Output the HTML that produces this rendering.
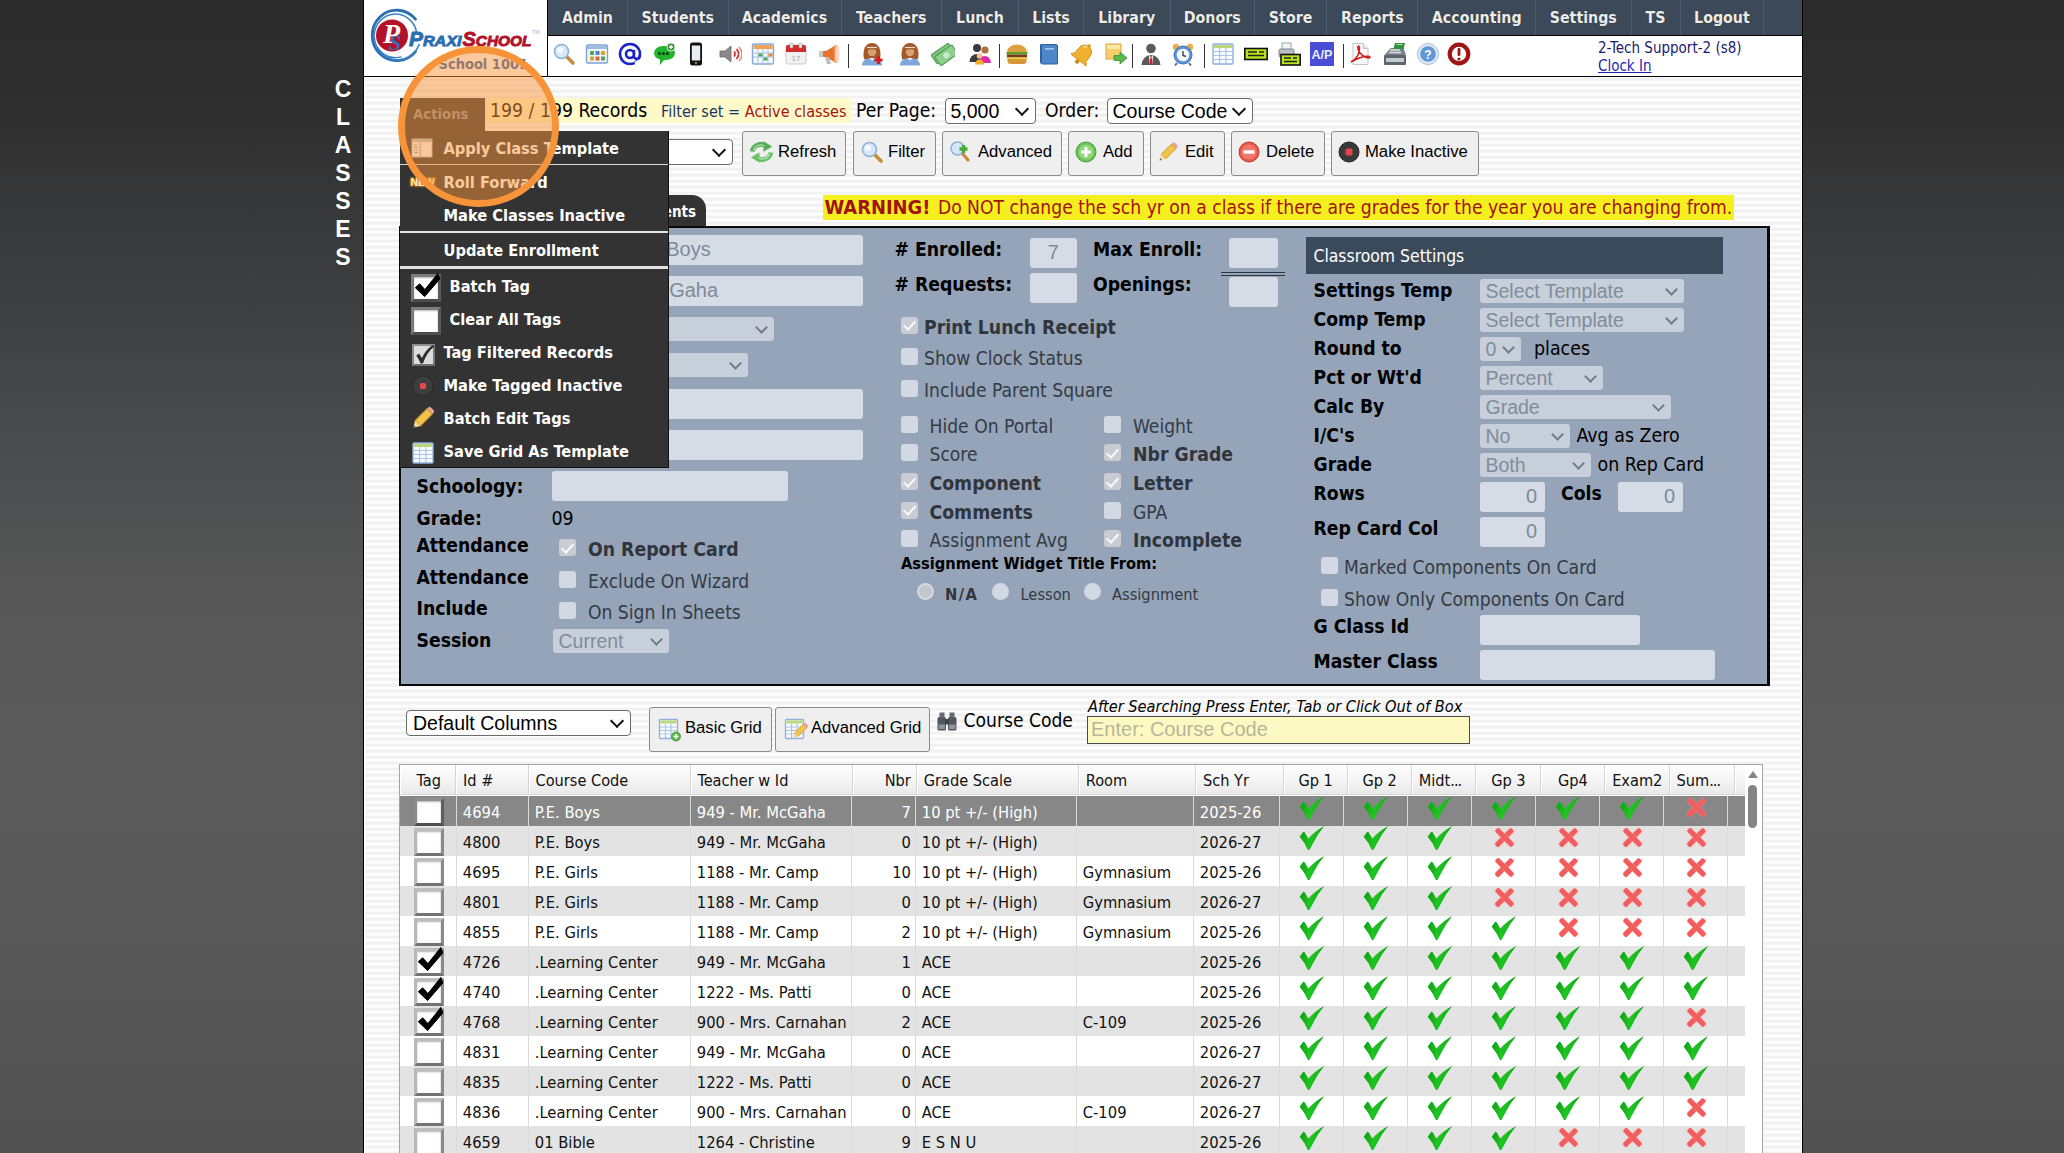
<!DOCTYPE html>
<html lang="en"><head><meta charset="utf-8"><title>Classes</title>
<style>
*{box-sizing:border-box;margin:0;padding:0}
html,body{width:2064px;height:1153px;overflow:hidden}
body{position:relative;background:linear-gradient(180deg,#2b2b2b 0,#2e2e2f 8%,#3f4041 27%,#4f5051 43%,#575757 52%,#5a5a5a 65%,#585858 80%,#515151 100%);font-family:"DejaVu Sans Condensed","DejaVu Sans","Liberation Sans",sans-serif;font-size:20px;font-stretch:condensed;color:#000}
.ab{position:absolute}
.ar{font-family:"Liberation Sans",sans-serif}
.t{position:absolute;white-space:nowrap;line-height:24px;height:24px}
.b{font-weight:bold}
#side{left:332px;top:75px;width:22px;color:#fff;font:bold 23px/28px "Liberation Sans",sans-serif;text-align:center}
#page{left:363px;top:0;width:1440px;height:1153px;border-left:1px solid #000;border-right:1px solid #000;background:repeating-linear-gradient(180deg,#f1f1f1 0,#f1f1f1 2.2px,#fdfdfd 3px,#fdfdfd 5.2px,#f1f1f1 6px);box-shadow:inset 1.5px 0 0 #fff,inset -1px 0 0 #fff}
#logo{left:364px;top:0;width:183px;height:76px;background:#fff}
#nav{left:547px;top:0;width:1255px;height:36px;background:#3c4958;border-left:1px solid #000;border-bottom:1px solid #000}
#nav span{position:absolute;top:0;height:35px;line-height:35.5px;text-align:center;color:#ececec;font-weight:bold;font-size:15.8px;border-right:1px solid #4e5d6d;text-shadow:0 0 1px #222}
#tools{left:547px;top:36px;width:1255px;height:40px;background:#fff;border-left:1px solid #000}
#hline{left:364px;top:76px;width:1438px;height:1px;background:#000}
.sep{position:absolute;top:44px;width:1px;height:24px;background:#333}
.ic{position:absolute;top:42px;width:24px;height:24px}
.btn{position:absolute;height:44px;background:#efefef;border:1px solid #8c8c8c;border-radius:3px;font:16.67px/42px "Liberation Sans",sans-serif;color:#000;white-space:nowrap}
.btn b{font-weight:normal;position:absolute;top:-1px;margin-left:-1px}
.btn svg{position:absolute;margin:-1.25px 0 0 -1.75px}
.btn.lo svg{margin:0 0 0 -.5px}
.btn.lo b{margin-left:0;top:-1px}
.sel{position:absolute;background:#fff;border:1px solid #6b6b6b;border-radius:4px;font:19.5px/24px "Liberation Sans",sans-serif;padding-left:5px;white-space:nowrap;overflow:hidden}
.sel:after,.ps:after{content:"";position:absolute;right:8px;top:50%;width:8px;height:8px;margin-top:-7px;border-right:2px solid #111;border-bottom:2px solid #111;transform:rotate(45deg)}
#panel{left:399px;top:226px;width:1371px;height:460px;background:#95a4b8;border:solid #0a0a0a;border-width:2px 3px 2px 2.5px}
.pi{position:absolute;background:#d6dce5;border-radius:3px;color:#7d8a9a;font:20px/30px "Liberation Sans",sans-serif;height:30px;white-space:nowrap;overflow:hidden}
.ps{position:absolute;background:#c7cfda;border-radius:3px;color:#7f8c9c;font:19.5px/24px "Liberation Sans",sans-serif;height:24px;padding-left:6px;white-space:nowrap;overflow:hidden}
.ps:after{border-color:#6f7c8c;right:8px;width:7px;height:7px;margin-top:-6px}
.lb{position:absolute;font-weight:bold;font-size:19.2px;line-height:24px;height:24px;white-space:nowrap;color:#000}
.cb{position:absolute;width:17px;height:17px;background:#d3d9e2;border-radius:3px}
.cb.on{background:#c9ccd2}
.cb.on:after{content:"";position:absolute;left:5.5px;top:1.5px;width:5px;height:10px;border-right:2.4px solid #fafafa;border-bottom:2.4px solid #fafafa;transform:rotate(42deg)}
.cl{position:absolute;font-size:19.1px;line-height:24px;height:24px;white-space:nowrap;color:#333b45}
.cl.b{color:#30353c;font-size:19.25px}
.rd{position:absolute;width:17px;height:17px;border-radius:50%;background:#d3d9e2}
#menu{left:400px;top:131px;width:269px;height:337px;background:#333;border-right:1px solid #111;border-bottom:1px solid #111}
#menu .mi{position:absolute;left:43.5px;color:#fff;font-weight:bold;font-size:16.3px;line-height:22px;height:22px;margin-top:.8px;white-space:nowrap}
#menu .ms{position:absolute;left:0;width:268px;background:#e2e2e2}
#circle{left:398px;top:46px;width:161px;height:161px;border-radius:50%;border:7.5px solid #f7943a;background:rgba(247,148,58,.5)}
#grid{left:399px;top:764px;width:1364px;height:400px;background:#fff;border:1px solid #a6a6a6}
.gh{position:absolute;top:0;height:30px;border-bottom:1px solid #d6d6d6;background:linear-gradient(180deg,#fdfdfd 0,#f6f6f6 45%,#e9e9e9 100%);border-right:1px solid #d4d4d4;border-left:1px solid #fff;font-size:16.2px;line-height:32.5px;white-space:nowrap;overflow:hidden;color:#111}
u{text-decoration:none;letter-spacing:-1px}
.gr{position:absolute;left:0;width:1345px;height:30px;font-size:16.4px;line-height:33.5px;color:#111}
.gr.o{background:#e3e3e3}
.gr.s{background:#878787;color:#fff}
.gr i{position:absolute;top:0;height:30px;font-style:normal;white-space:nowrap;overflow:hidden;border-right:1px solid #dbdbdb}
.gr.s i{border-right-color:#dadada}
.gr i.r{text-align:right;padding-right:4px}
.gr i.c{text-align:center}
.bx{position:absolute;left:14px;top:1.5px;width:30px;height:28.5px;background:#fff;border:3.5px solid;border-color:#bdbdbd #8a8a8a #727272 #b8b8b8;box-shadow:inset 0 1px 2px rgba(0,0,0,.3)}
.gr.s .bx{border-color:#8f8f8f #5e5e5e #4f4f4f #8c8c8c}
#menu .bx{border-color:#7c7c7c #5a5a5a #4e4e4e #7a7a7a}
.ck{position:absolute;top:0;width:26px;height:25px;background:linear-gradient(100deg,#0c9a10,#1fc524 45%,#0f9d12);clip-path:path('M1.2 10.7L4.5 6Q5.5 5.6 6.2 6.3L9.8 12.6Q17 4.5 25.8 0Q19 8 15 16.5Q12.5 21 11 24L9.3 24Q6 16 1.2 10.7Z')}
.xx{position:absolute;top:1.4px;width:20px;height:20px}
.xx:before,.xx:after{content:"";position:absolute;left:7.65px;top:-1.35px;width:4.7px;height:22.7px;background:#f35c5c;border-radius:1.5px;transform:rotate(45deg);box-shadow:0 0 1.5px #fa9a9a}
.xx:after{transform:rotate(-45deg)}
</style></head>
<body>
<div id="side" class="ab">C<br>L<br>A<br>S<br>S<br>E<br>S</div>
<div id="page" class="ab"></div>
<div id="logo" class="ab">
<svg class="ab" style="left:0;top:0" width="183" height="76" viewBox="0 0 183 76">
<path d="M51.5 51.6A24.5 25.2 0 1 1 51.5 19.2" fill="none" stroke="#2a6db0" stroke-width="2.8" stroke-linecap="round"/>
<path d="M37.0 56.9A21.3 21.8 0 1 1 52.5 32.0" fill="none" stroke="#3b82c4" stroke-width="1.5" stroke-linecap="round"/>
<path d="M55.1 44.5A23 23.5 0 0 1 13.6 48.2" fill="none" stroke="#3b82c4" stroke-width="1.6" stroke-linecap="round"/>
<circle cx="28" cy="35.4" r="16" fill="#b4122b"/>
<text x="19" y="43" font-family="Liberation Serif,serif" font-style="italic" font-weight="bold" font-size="28" fill="#fff">P</text>
<text x="25" y="49.5" font-family="Liberation Serif,serif" font-style="italic" font-weight="bold" font-size="22" fill="#356fb6">S</text>
<text x="45" y="45.5" font-family="Liberation Sans,sans-serif" font-style="italic" font-weight="bold" font-size="20" fill="#2a6db0" stroke="#2a6db0" stroke-width=".9" textLength="52.5" lengthAdjust="spacingAndGlyphs"><tspan>P</tspan><tspan font-size="15.5">RAXI</tspan></text>
<text x="98.5" y="45.5" font-family="Liberation Sans,sans-serif" font-style="italic" font-weight="bold" font-size="20" fill="#b4122b" stroke="#b4122b" stroke-width=".9" textLength="69" lengthAdjust="spacingAndGlyphs"><tspan>S</tspan><tspan font-size="15.5">CHOOL</tspan></text>
<text x="168" y="33.5" font-family="Liberation Sans,sans-serif" font-size="5.5" fill="#9db4cf">TM</text>
</svg>
<div class="t b" style="left:74.5px;top:51.5px;font-size:14.5px;color:#2b5fa8">School 1001</div>
</div>
<div id="nav" class="ab"><span style="left:0.0px;width:80.0px">Admin</span><span style="left:80.0px;width:100.5px">Students</span><span style="left:180.5px;width:113.0px">Academics</span><span style="left:293.5px;width:100.5px">Teachers</span><span style="left:394.0px;width:77.0px">Lunch</span><span style="left:471.0px;width:65.0px">Lists</span><span style="left:536.0px;width:86.5px">Library</span><span style="left:622.5px;width:84.5px">Donors</span><span style="left:707.0px;width:72.2px">Store</span><span style="left:779.2px;width:91.3px">Reports</span><span style="left:870.5px;width:117.5px">Accounting</span><span style="left:988.0px;width:95.5px">Settings</span><span style="left:1083.5px;width:49.0px">TS</span><span style="left:1132.5px;width:83.9px">Logout</span></div>
<div id="tools" class="ab"></div>
<div id="hline" class="ab"></div>
<div class="sep" style="left:847.5px"></div>
<div class="sep" style="left:999.0px"></div>
<div class="sep" style="left:1132.0px"></div>
<div class="sep" style="left:1204.0px"></div>
<div class="sep" style="left:1342.5px"></div>
<svg class="ab" style="left:552px;top:42px" width="24" height="24" viewBox="0 0 24 24"><line x1="14" y1="14" x2="21" y2="21" stroke="#c98a3c" stroke-width="3.6" stroke-linecap="round"/><circle cx="9.5" cy="9.5" r="7" fill="#d4e8fb" stroke="#8fb2d6" stroke-width="1.6"/><circle cx="8" cy="8" r="3.2" fill="#f2f9ff"/></svg>
<svg class="ab" style="left:585px;top:42px" width="24" height="24" viewBox="0 0 24 24"><rect x="1.5" y="3" width="21" height="18" rx="1.5" fill="#eef5fc" stroke="#7fa3d0" stroke-width="1.4"/><rect x="2" y="3.5" width="20" height="3.5" fill="#9dbde3"/><rect x="5" y="9" width="4" height="4" fill="#5aa65a"/><rect x="10.5" y="9" width="4" height="4" fill="#4f86c6"/><rect x="16" y="9" width="4" height="4" fill="#e0a030"/><rect x="5" y="14.5" width="4" height="4" fill="#d9a23a"/><rect x="10.5" y="14.5" width="4" height="4" fill="#d86a3a"/><rect x="16" y="14.5" width="4" height="4" fill="#5aa65a"/></svg>
<svg class="ab" style="left:618px;top:42px" width="24" height="24" viewBox="0 0 24 24"><circle cx="12" cy="12" r="10" fill="none" stroke="#1a22c8" stroke-width="2.6"/><circle cx="12" cy="12" r="4" fill="none" stroke="#1a22c8" stroke-width="2.6"/><path d="M16 8v6.5a2.6 2.6 0 0 0 5.5 -1" fill="none" stroke="#1a22c8" stroke-width="2.4"/><path d="M17 21.5l5-3" stroke="#fff" stroke-width="3"/></svg>
<svg class="ab" style="left:651.5px;top:42px" width="24" height="24" viewBox="0 0 24 24"><path d="M2 11a9 7 0 0 1 9-7h3a9 7 0 0 1 0 14h-2l-4 5v-5.5a8 7 0 0 1-6-6.5z" fill="#22b42c"/><circle cx="7.5" cy="11.5" r="1.5" fill="#0b3d10"/><circle cx="11.5" cy="11.5" r="1.5" fill="#0b3d10"/><circle cx="15.5" cy="11.5" r="1.5" fill="#0b3d10"/><circle cx="19" cy="5" r="4" fill="#3a8f3f" stroke="#cfe9d0" stroke-width="1"/><path d="M19 3v4M17 5h4" stroke="#fff" stroke-width="1.3"/></svg>
<svg class="ab" style="left:684px;top:42px" width="24" height="24" viewBox="0 0 24 24"><rect x="6" y="0.5" width="12" height="23" rx="2.5" fill="#111"/><rect x="7.8" y="3.5" width="8.4" height="15" fill="#e9eef5"/><circle cx="12" cy="21" r="1.2" fill="#888"/></svg>
<svg class="ab" style="left:718px;top:42px" width="24" height="24" viewBox="0 0 24 24"><path d="M2 9h5l6-5v16l-6-5H2z" fill="#8a8a8a" stroke="#6a6a6a" stroke-width=".8"/><path d="M16 9.5a3.5 3.5 0 0 1 0 5" fill="none" stroke="#d23a3a" stroke-width="1.8"/><path d="M18.5 7a7 7 0 0 1 0 10" fill="none" stroke="#d23a3a" stroke-width="1.8"/><path d="M21 5a10 10 0 0 1 0 14" fill="none" stroke="#e88" stroke-width="1.5"/></svg>
<svg class="ab" style="left:751px;top:42px" width="24" height="24" viewBox="0 0 24 24"><rect x="1.5" y="2" width="21" height="20" rx="1.5" fill="#f4f8fd" stroke="#86a9d6" stroke-width="1.4"/><rect x="2.5" y="3" width="19" height="4" fill="#f0a35a"/><path d="M2 11h20M2 15h20M7 7v15M12 7v15M17 7v15" stroke="#a9c2e2" stroke-width="1"/><rect x="7.5" y="11.5" width="4" height="3" fill="#4fa85a"/><rect x="12.5" y="15.5" width="4" height="3" fill="#4fa85a"/><rect x="17.5" y="11.5" width="4" height="3" fill="#e58a3a"/></svg>
<svg class="ab" style="left:784px;top:42px" width="24" height="24" viewBox="0 0 24 24"><rect x="2" y="3" width="20" height="19" rx="2" fill="#f2f2f2" stroke="#c9c9c9" stroke-width="1"/><path d="M2 5a2 2 0 0 1 2-2h16a2 2 0 0 1 2 2v5H2z" fill="#d22d2d"/><rect x="6" y="1" width="3" height="5" rx="1" fill="#eee" stroke="#999" stroke-width=".6"/><rect x="15" y="1" width="3" height="5" rx="1" fill="#eee" stroke="#999" stroke-width=".6"/><text x="12" y="19" text-anchor="middle" font-family="Liberation Sans,sans-serif" font-size="8" fill="#aaa">17</text></svg>
<svg class="ab" style="left:817px;top:42px" width="24" height="24" viewBox="0 0 24 24"><path d="M3 9h6l10-6v18l-10-6H3z" fill="#e8742c"/><path d="M19 3v18" stroke="#f3b48a" stroke-width="3"/><rect x="2" y="9" width="4" height="6" fill="#c9c9c9"/><path d="M8 15l2 7h4l-2-7z" fill="#bdbdbd"/><ellipse cx="20.5" cy="12" rx="2" ry="9" fill="#f6d6c0"/></svg>
<svg class="ab" style="left:860px;top:42px" width="24" height="24" viewBox="0 0 24 24"><path d="M4 17c-2-10 2-16 8-16s10 6 8 16c-2 1.5-14 1.5-16 0z" fill="#a4582c"/><ellipse cx="12" cy="9.5" rx="4.2" ry="4.8" fill="#d9a273"/><path d="M2 23.5c0-5 4-7.5 10-7.5s10 2.5 10 7.5z" fill="#7fa6d8"/><path d="M9.5 16l2.5 3 2.5-3z" fill="#e8eef6"/><path d="M6.5 6c3-2.5 8-2.5 11 0l-.5 2.5c-3-1.8-7-1.8-10 0z" fill="#a4582c"/><path d="M7 5.5h10" stroke="#e9d9c8" stroke-width="1.2"/><path d="M18.5 14v8M14.5 18h8" stroke="#e01818" stroke-width="3"/></svg>
<svg class="ab" style="left:898px;top:42px" width="24" height="24" viewBox="0 0 24 24"><path d="M4 17c-2-10 2-16 8-16s10 6 8 16c-2 1.5-14 1.5-16 0z" fill="#a4582c"/><ellipse cx="12" cy="9.5" rx="4.2" ry="4.8" fill="#d9a273"/><path d="M2 23.5c0-5 4-7.5 10-7.5s10 2.5 10 7.5z" fill="#7fa6d8"/><path d="M9.5 16l2.5 3 2.5-3z" fill="#e8eef6"/><path d="M6.5 6c3-2.5 8-2.5 11 0l-.5 2.5c-3-1.8-7-1.8-10 0z" fill="#a4582c"/><path d="M7 5.5h10" stroke="#e9d9c8" stroke-width="1.2"/></svg>
<svg class="ab" style="left:931px;top:42px" width="24" height="24" viewBox="0 0 24 24"><g transform="rotate(-35 12 12)"><rect x="1.5" y="6" width="21" height="11" rx="1" fill="#7cc47c" stroke="#4f9a55" stroke-width="1"/><rect x="3.5" y="9.5" width="21" height="11" rx="1" fill="#8fd08f" stroke="#4f9a55" stroke-width="1"/><circle cx="14" cy="15" r="3" fill="#c9ebc9"/></g></svg>
<svg class="ab" style="left:968px;top:42px" width="24" height="24" viewBox="0 0 24 24"><circle cx="9" cy="6" r="4" fill="#3a3a3a"/><path d="M1.5 20a7.5 8 0 0 1 15 0z" fill="#3a3a3a"/><circle cx="17" cy="8" r="3.6" fill="#b0703a"/><path d="M11 21a6 7 0 0 1 12 0z" fill="#e02aa8"/><circle cx="11.5" cy="14" r="2.8" fill="#f0c090"/><path d="M7 22.5a4.5 5 0 0 1 9 0z" fill="#f0b020"/></svg>
<svg class="ab" style="left:1005px;top:42px" width="24" height="24" viewBox="0 0 24 24"><path d="M2 10a10 7.5 0 0 1 20 0z" fill="#e0a040"/><rect x="1.5" y="10" width="21" height="2.5" fill="#5aa02c"/><rect x="2" y="12.5" width="20" height="3" fill="#7a3a1a"/><rect x="1.5" y="15.5" width="21" height="1.5" fill="#e8d040"/><path d="M2.5 17h19v2a3 3 0 0 1-3 3h-13a3 3 0 0 1-3-3z" fill="#d89838"/></svg>
<svg class="ab" style="left:1037px;top:42px" width="24" height="24" viewBox="0 0 24 24"><path d="M4 2.5h15a1.5 1.5 0 0 1 1.5 1.5v18h-15a2 2 0 0 1-2-2V3.5z" fill="#4d86c9" stroke="#2f62a4" stroke-width="1"/><path d="M4 2.5v18" stroke="#2f62a4" stroke-width="2"/><rect x="8" y="6" width="9" height="1.6" fill="#a9c8ec"/></svg>
<svg class="ab" style="left:1070.5px;top:42px" width="24" height="24" viewBox="0 0 24 24"><g transform="rotate(38 12 12)"><path d="M12 2.5a7 7 0 0 1 7 7v6.5l3 3.5h-20l3-3.5V9.5a7 7 0 0 1 7-7z" fill="#f0b22e" stroke="#c98a14" stroke-width=".8"/><path d="M8 6a5 5 0 0 1 3-2" stroke="#fbe09a" stroke-width="1.6" fill="none"/><circle cx="12" cy="21.5" r="2.2" fill="#c98a14"/><circle cx="12" cy="1.8" r="1.6" fill="#d99a1c"/></g></svg>
<svg class="ab" style="left:1104px;top:42px" width="24" height="24" viewBox="0 0 24 24"><rect x="2" y="2" width="15" height="15" fill="#f6cf6a" stroke="#e0a64a" stroke-width="1"/><rect x="3" y="3" width="13" height="4" fill="#fbe6a8"/><path d="M10 13.5h6v-3.5l7 6-7 6v-3.5h-6z" fill="#5cb84c" stroke="#3d8f32" stroke-width=".8"/></svg>
<svg class="ab" style="left:1138.5px;top:42px" width="24" height="24" viewBox="0 0 24 24"><circle cx="12" cy="6.5" r="4.8" fill="#5a5a5a"/><path d="M2.5 23a9.5 10 0 0 1 19 0z" fill="#5a5a5a"/><path d="M10 13l2 2.5 2-2.5 -.6 9h-2.8z" fill="#fff"/><path d="M11.3 15.5h1.4l.8 6-1.5 1.5-1.5-1.5z" fill="#d02020"/></svg>
<svg class="ab" style="left:1171px;top:42px" width="24" height="24" viewBox="0 0 24 24"><circle cx="5" cy="5" r="3.2" fill="#e8b04c"/><circle cx="19" cy="5" r="3.2" fill="#e8b04c"/><circle cx="12" cy="13" r="9" fill="#5b93d4" stroke="#3f73b2" stroke-width="1"/><circle cx="12" cy="13" r="6.3" fill="#f4f8fc"/><path d="M12 9v4.5l3 1" stroke="#345" stroke-width="1.4" fill="none"/><path d="M6 21l-2 2.5M18 21l2 2.5" stroke="#3f73b2" stroke-width="2"/></svg>
<svg class="ab" style="left:1210.5px;top:42px" width="24" height="24" viewBox="0 0 24 24"><rect x="2" y="2" width="20" height="20" rx="1" fill="#f8fbff" stroke="#8fb0dc" stroke-width="1.4"/><rect x="3" y="3" width="18" height="3" fill="#bcd97a"/><path d="M2 9.5h20M2 13.5h20M2 17.5h20M8.5 6v16M15 6v16" stroke="#a8c4e6" stroke-width="1.2"/></svg>
<svg class="ab" style="left:1244px;top:42px" width="24" height="24" viewBox="0 0 24 24"><rect x=".8" y="6.5" width="22.4" height="11" fill="#b7e21c" stroke="#111" stroke-width="1.6"/><path d="M4 10h9M4 13.5h16M15 10h5" stroke="#222" stroke-width="1.4"/></svg>
<svg class="ab" style="left:1277px;top:42px" width="24" height="24" viewBox="0 0 24 24"><rect x="5" y="1" width="9" height="7" fill="#f4f4f4" stroke="#8aa" stroke-width="1"/><rect x="2" y="7" width="15" height="8" rx="1.5" fill="#b8bec6" stroke="#7c848e" stroke-width="1"/><rect x="4" y="12.5" width="19.2" height="10.5" fill="#b7e21c" stroke="#111" stroke-width="1.6"/><path d="M7 16h7M7 19.5h13M16 16h4" stroke="#222" stroke-width="1.3"/></svg>
<svg class="ab" style="left:1310px;top:42px" width="24" height="24" viewBox="0 0 24 24"><rect x="0" y="0" width="24" height="24" fill="#4a4ed6"/><text x="12" y="17" text-anchor="middle" font-family="Liberation Sans,sans-serif" font-weight="bold" font-size="12.5" fill="#e8ecff" textLength="21" lengthAdjust="spacingAndGlyphs">A/P</text></svg>
<svg class="ab" style="left:1348px;top:42px" width="24" height="24" viewBox="0 0 24 24"><path d="M5 1.5h10l5 5v16H5z" fill="#fbfbfb" stroke="#c4c4c4" stroke-width="1"/><path d="M15 1.5v5h5" fill="#e6e6e6" stroke="#c4c4c4" stroke-width="1"/><path d="M3 20c6-3 9-9 8.5-14.5c-.3-2.5-2.5-1.5-1.5 1.5c1.5 5 6 8.5 10.5 9c2.5 0 2-2-1-1.8c-5 .3-11 2.3-16.5 5.8z" fill="none" stroke="#d21c1c" stroke-width="1.5"/></svg>
<svg class="ab" style="left:1382.5px;top:42px" width="24" height="24" viewBox="0 0 24 24"><path d="M1.5 13l6-7h13l2.5 7z" fill="#7d838b"/><path d="M12 1h10l-1.5 6h-10z" fill="#2f8f3a"/><path d="M13.5 2.5h6" stroke="#9fdc9f" stroke-width="1.2"/><rect x="1" y="13" width="22" height="10" rx="1" fill="#5f656d"/><rect x="3" y="16" width="18" height="4" fill="#c4c9cf"/><path d="M7 8h10M6 10.5h12" stroke="#dfe3e8" stroke-width="1.3"/></svg>
<svg class="ab" style="left:1415.5px;top:42px" width="24" height="24" viewBox="0 0 24 24"><circle cx="12" cy="12" r="10.5" fill="#dfe9f6" stroke="#a9bfdc" stroke-width="1"/><circle cx="12" cy="12" r="7.8" fill="#5f97d8"/><text x="12" y="16.5" text-anchor="middle" font-family="Liberation Sans,sans-serif" font-weight="bold" font-size="12" fill="#fff">?</text></svg>
<svg class="ab" style="left:1447px;top:42px" width="24" height="24" viewBox="0 0 24 24"><circle cx="12" cy="12" r="9.3" fill="#fff" stroke="#a01616" stroke-width="4.2"/><rect x="10.6" y="6" width="2.8" height="8" rx="1" fill="#a01616"/><circle cx="12" cy="17" r="1.6" fill="#a01616"/></svg>
<div class="t" style="left:1598px;top:37px;font-size:15px;line-height:22px;color:#1b1b6e">2-Tech Support-2 (s8)</div>
<div class="t" style="left:1598px;top:55px;font-size:15px;line-height:22px;color:#1f1fb4;text-decoration:underline">Clock In</div>
<div class="ab" style="left:485px;top:98px;width:366px;height:25px;background:rgba(255,249,196,.9)"></div>
<div class="ab" style="left:400px;top:98px;width:85px;height:33px;background:#333"></div>
<div class="t b" style="left:413px;top:102.0px;font-size:14.75px;color:#8f8f8f">Actions</div>
<div class="t " style="left:490px;top:98.5px;font-size:19.25px">199 / 199 Records</div>
<div class="t " style="left:661px;top:99.5px;font-size:16.1px"><span style="color:#17365d">Filter set = </span><span style="color:#a3150f">Active classes</span></div>
<div class="t " style="left:856px;top:98.5px;font-size:19.1px">Per Page:</div>
<div class="sel" style="left:944.5px;top:98px;width:91px;height:26px">5,000</div>
<div class="t " style="left:1045px;top:98.5px;font-size:19.1px">Order:</div>
<div class="sel" style="left:1106.5px;top:98px;width:146px;height:26px">Course Code</div>
<div class="sel" style="left:552px;top:139px;width:181px;height:26px"></div>
<div class="btn" style="left:742px;top:131px;width:104px;height:44.5px"><svg class="ab" style="left:8px;top:9px" width="25" height="24" viewBox="0 0 25 24"><path d="M3.2 11.5a8.8 8.3 0 0 1 14.3-5.3" fill="none" stroke="#58ad5c" stroke-width="4.8"/><path d="M14.2 1.2l9 5.2-8.6 5.3z" fill="#58ad5c"/><path d="M21.8 12.5a8.8 8.3 0 0 1-14.3 5.3" fill="none" stroke="#6cc06c" stroke-width="4.8"/><path d="M10.8 22.8l-9-5.200 8.6-5.3z" fill="#6cc06c"/><path d="M4.5 10.5a7.5 7 0 0 1 11-4.5" fill="none" stroke="#a5dba0" stroke-width="1.4"/><path d="M20.5 13.5a7.5 7 0 0 1-11 4.5" fill="none" stroke="#b0e2ab" stroke-width="1.4"/></svg><b style="left:36px">Refresh</b></div>
<div class="btn" style="left:853px;top:131px;width:83px;height:44.5px"><svg class="ab" style="left:8px;top:9px" width="24" height="24" viewBox="0 0 24 24"><line x1="14" y1="14" x2="21" y2="21" stroke="#c98a3c" stroke-width="3.6" stroke-linecap="round"/><circle cx="9.5" cy="9.5" r="7" fill="#d4e8fb" stroke="#8fb2d6" stroke-width="1.6"/><circle cx="8" cy="8" r="3.2" fill="#f2f9ff"/></svg><b style="left:35px">Filter</b></div>
<div class="btn" style="left:942px;top:131px;width:120px;height:44.5px"><svg class="ab" style="left:8px;top:9px" width="24" height="24" viewBox="0 0 24 24"><line x1="13" y1="13" x2="19" y2="20" stroke="#c98a3c" stroke-width="3.2" stroke-linecap="round"/><circle cx="8.5" cy="8.5" r="6.5" fill="#d4e8fb" stroke="#8fb2d6" stroke-width="1.5"/><path d="M14.5 5v8M10.5 9h8" stroke="#4caa3c" stroke-width="3.4"/></svg><b style="left:36px">Advanced</b></div>
<div class="btn" style="left:1068px;top:131px;width:76px;height:44.5px"><svg class="ab" style="left:8px;top:10px" width="22" height="22" viewBox="0 0 22 22"><circle cx="11" cy="11" r="10" fill="#6cc45a" stroke="#4a9a3c" stroke-width="1"/><circle cx="11" cy="11" r="7.5" fill="#8fd87a"/><path d="M11 6v10M6 11h10" stroke="#fff" stroke-width="3"/></svg><b style="left:35px">Add</b></div>
<div class="btn" style="left:1150px;top:131px;width:75px;height:44.5px"><svg class="ab" style="left:6px;top:8px" width="26" height="26" viewBox="0 0 24 24"><g transform="rotate(45 12 12)"><rect x="9" y="1.5" width="6" height="4" rx="1.5" fill="#e8a0a0"/><rect x="9" y="4.5" width="6" height="13.5" fill="#f2c34a" stroke="#cf9a2a" stroke-width=".8"/><path d="M9 18l3 5 3-5z" fill="#f3d9a8"/><path d="M11 21.300l1 1.700 1-1.700z" fill="#444"/></g></svg><b style="left:35px">Edit</b></div>
<div class="btn" style="left:1231px;top:131px;width:94px;height:44.5px"><svg class="ab" style="left:8px;top:10px" width="22" height="22" viewBox="0 0 22 22"><circle cx="11" cy="11" r="10" fill="#e8584e" stroke="#c23a30" stroke-width="1"/><circle cx="11" cy="11" r="7.5" fill="#f2766c"/><rect x="5.5" y="9.3" width="11" height="3.4" rx="1" fill="#fff"/></svg><b style="left:35px">Delete</b></div>
<div class="btn" style="left:1331px;top:131px;width:147.5px;height:44.5px"><svg class="ab" style="left:8px;top:10px" width="22" height="22" viewBox="0 0 22 22"><circle cx="11" cy="11" r="10" fill="#3a3a3a" stroke="#222" stroke-width="1"/><rect x="7.5" y="7.5" width="7" height="7" rx="1.5" fill="#e0464a"/></svg><b style="left:34px">Make Inactive</b></div>
<div class="ab" style="left:560px;top:195px;width:146px;height:32px;background:#333;border-radius:0 14px 0 0"></div>
<div class="t b" style="left:560px;width:136px;text-align:right;top:200px;font-size:15px;color:#fff">Students</div>
<div class="ab" style="left:823px;top:195px;width:911px;height:24.5px;background:#f6ef1f"></div>
<div class="t " style="left:824.5px;top:195.5px;font-size:19.13px;color:#a21212"><b style="font-size:19.9px;margin-right:2px">WARNING!</b> Do NOT change the sch yr on a class if there are grades for the year you are changing from.</div>
<div id="panel" class="ab"></div>
<div class="pi" style="left:552px;top:235px;width:311px;height:30px;line-height:29px;"><span style="position:absolute;left:73.5px">P.E. Boys</span></div>
<div class="pi" style="left:552px;top:276px;width:311px;height:30px;line-height:29px;"><span style="position:absolute;left:6px">949 - Mr. McGaha</span></div>
<div class="ps" style="left:552px;top:317px;width:222px"></div>
<div class="ps" style="left:552px;top:353px;width:196px"></div>
<div class="pi" style="left:552px;top:389px;width:311px;height:30px;line-height:29px;"></div>
<div class="pi" style="left:552px;top:430px;width:311px;height:30px;line-height:29px;"></div>
<div class="lb" style="left:416.5px;top:474.5px">Schoology:</div>
<div class="pi" style="left:552px;top:470.5px;width:236px;height:30px;line-height:29px;"></div>
<div class="lb" style="left:416.5px;top:507.0px">Grade:</div>
<div class="t" style="left:551.5px;top:507px;font-size:19.4px">09</div>
<div class="lb" style="left:416.5px;top:534.0px">Attendance</div>
<div class="cb on" style="left:558.5px;top:539px"></div>
<div class="cl b" style="left:588px;top:537.5px">On Report Card</div>
<div class="lb" style="left:416.5px;top:566.0px">Attendance</div>
<div class="cb" style="left:558.5px;top:570.5px"></div>
<div class="cl" style="left:588px;top:569.5px">Exclude On Wizard</div>
<div class="lb" style="left:416.5px;top:597.0px">Include</div>
<div class="cb" style="left:558.5px;top:602px"></div>
<div class="cl" style="left:588px;top:601.0px">On Sign In Sheets</div>
<div class="lb" style="left:416.5px;top:629.0px">Session</div>
<div class="ps" style="left:552.5px;top:629px;width:116px">Current</div>
<div class="lb" style="left:894.5px;top:238.0px"># Enrolled:</div>
<div class="pi" style="left:1029.5px;top:237.5px;width:47.5px;height:30px;line-height:29px;text-align:center">7</div>
<div class="lb" style="left:1093px;top:238.0px">Max Enroll:</div>
<div class="pi" style="left:1228.5px;top:237.5px;width:49px;height:30px;line-height:29px;"></div>
<div class="ab" style="left:1221px;top:272px;width:64px;height:4px;border-top:1px solid #2b3440;border-bottom:1px solid #2b3440"></div>
<div class="lb" style="left:894.5px;top:273.0px"># Requests:</div>
<div class="pi" style="left:1029.5px;top:272.5px;width:47.5px;height:30px;line-height:29px;"></div>
<div class="lb" style="left:1093px;top:273.0px">Openings:</div>
<div class="pi" style="left:1228.5px;top:276.5px;width:49px;height:30px;line-height:29px;"></div>
<div class="cb on" style="left:900.5px;top:316.5px"></div>
<div class="cl b" style="left:924px;top:316.0px">Print Lunch Receipt</div>
<div class="cb" style="left:900.5px;top:348px"></div>
<div class="cl" style="left:924px;top:347.0px">Show Clock Status</div>
<div class="cb" style="left:900.5px;top:380px"></div>
<div class="cl" style="left:924px;top:379.0px">Include Parent Square</div>
<div class="cb" style="left:900.5px;top:415.5px"></div>
<div class="cl" style="left:929.5px;top:414.5px">Hide On Portal</div>
<div class="cb" style="left:900.5px;top:444px"></div>
<div class="cl" style="left:929.5px;top:443.0px">Score</div>
<div class="cb on" style="left:900.5px;top:473px"></div>
<div class="cl b" style="left:929.5px;top:472.0px">Component</div>
<div class="cb on" style="left:900.5px;top:501.5px"></div>
<div class="cl b" style="left:929.5px;top:500.5px">Comments</div>
<div class="cb" style="left:900.5px;top:529.5px"></div>
<div class="cl" style="left:929.5px;top:528.5px">Assignment Avg</div>
<div class="cb" style="left:1103.5px;top:415.5px"></div>
<div class="cl" style="left:1133px;top:414.5px">Weight</div>
<div class="cb on" style="left:1103.5px;top:444px"></div>
<div class="cl b" style="left:1133px;top:443.0px">Nbr Grade</div>
<div class="cb on" style="left:1103.5px;top:473px"></div>
<div class="cl b" style="left:1133px;top:472.0px">Letter</div>
<div class="cb" style="left:1103.5px;top:501.5px"></div>
<div class="cl" style="left:1133px;top:500.5px">GPA</div>
<div class="cb on" style="left:1103.5px;top:529.5px"></div>
<div class="cl b" style="left:1133px;top:528.5px">Incomplete</div>
<div class="lb" style="left:901px;top:551.5px;font-size:16.3px">Assignment Widget Title From:</div>
<div class="rd" style="left:917px;top:582.5px;background:#c3c6cc;border:2.5px solid #d6dbe3"></div>
<div class="cl b" style="left:945px;top:583px;font-size:16.3px;letter-spacing:1.4px">N/A</div>
<div class="rd" style="left:992px;top:582.5px"></div>
<div class="cl" style="left:1020.5px;top:583px;font-size:16.3px">Lesson</div>
<div class="rd" style="left:1083.5px;top:582.5px"></div>
<div class="cl" style="left:1112px;top:583px;font-size:16.3px">Assignment</div>
<div class="ab" style="left:1306px;top:237px;width:417px;height:37px;background:#3b4a5b"></div>
<div class="t" style="left:1313.5px;top:244px;font-size:17.4px;color:#fff">Classroom Settings</div>
<div class="lb" style="left:1313.5px;top:279.0px">Settings Temp</div>
<div class="ps" style="left:1479.5px;top:279px;width:204.5px">Select Template</div>
<div class="lb" style="left:1313.5px;top:308.0px">Comp Temp</div>
<div class="ps" style="left:1479.5px;top:308px;width:204.5px">Select Template</div>
<div class="lb" style="left:1313.5px;top:336.5px">Round to</div>
<div class="ps" style="left:1479.5px;top:337px;width:41.5px">0</div>
<div class="t" style="left:1534px;top:337px;font-size:19.4px">places</div>
<div class="lb" style="left:1313.5px;top:365.5px">Pct or Wt'd</div>
<div class="ps" style="left:1479.5px;top:365.5px;width:123.5px">Percent</div>
<div class="lb" style="left:1313.5px;top:394.5px">Calc By</div>
<div class="ps" style="left:1479.5px;top:394.5px;width:191.5px">Grade</div>
<div class="lb" style="left:1313.5px;top:423.5px">I/C's</div>
<div class="ps" style="left:1479.5px;top:423.5px;width:90.5px">No</div>
<div class="t" style="left:1576.5px;top:424px;font-size:19.4px">Avg as Zero</div>
<div class="lb" style="left:1313.5px;top:452.5px">Grade</div>
<div class="ps" style="left:1479.5px;top:452.5px;width:111.5px">Both</div>
<div class="t" style="left:1597.5px;top:453px;font-size:19.4px">on Rep Card</div>
<div class="lb" style="left:1313.5px;top:482.0px">Rows</div>
<div class="pi" style="left:1479.5px;top:482px;width:65.5px;height:30px;line-height:29px;text-align:right;padding-right:8px">0</div>
<div class="lb" style="left:1561px;top:482.0px">Cols</div>
<div class="pi" style="left:1617.5px;top:482px;width:65.5px;height:30px;line-height:29px;text-align:right;padding-right:8px">0</div>
<div class="lb" style="left:1313.5px;top:517.0px">Rep Card Col</div>
<div class="pi" style="left:1479.5px;top:517px;width:65.5px;height:30px;line-height:29px;text-align:right;padding-right:8px">0</div>
<div class="cb" style="left:1320.5px;top:557px"></div>
<div class="cl" style="left:1344px;top:556.0px">Marked Components On Card</div>
<div class="cb" style="left:1320.5px;top:588.5px"></div>
<div class="cl" style="left:1344px;top:588.0px">Show Only Components On Card</div>
<div class="lb" style="left:1313.5px;top:615.0px">G Class Id</div>
<div class="pi" style="left:1479.5px;top:615px;width:160.5px;height:30px;line-height:29px;"></div>
<div class="lb" style="left:1313.5px;top:650.0px">Master Class</div>
<div class="pi" style="left:1479.5px;top:650px;width:235.5px;height:30px;line-height:29px;"></div>
<div class="sel" style="left:406px;top:710px;width:225px;height:26px;padding-left:6px">Default Columns</div>
<div class="btn lo" style="left:649px;top:707px;width:123px;height:45px"><svg class="ab" style="left:8px;top:10px" width="24" height="24" viewBox="0 0 24 24"><rect x="1.5" y="1.5" width="18" height="19" rx="1" fill="#f8fbff" stroke="#8fb0dc" stroke-width="1.3"/><rect x="2.5" y="2.5" width="16" height="3" fill="#bcd97a"/><path d="M2 9h17M2 12.5h17M2 16h17M7.5 5.5v15M13 5.5v15" stroke="#a8c4e6" stroke-width="1.1"/><circle cx="18" cy="18.5" r="4.5" fill="#5cb84c" stroke="#3a8a30" stroke-width=".8"/><path d="M18 16v5M15.5 18.5h5" stroke="#fff" stroke-width="1.5"/></svg><b style="left:35px">Basic Grid</b></div>
<div class="btn lo" style="left:775px;top:707px;width:155px;height:45px"><svg class="ab" style="left:8px;top:10px" width="24" height="24" viewBox="0 0 24 24"><rect x="1.5" y="1.5" width="18" height="19" rx="1" fill="#f8fbff" stroke="#8fb0dc" stroke-width="1.3"/><rect x="2.5" y="2.5" width="16" height="3" fill="#bcd97a"/><path d="M2 9h17M2 12.5h17M2 16h17M7.5 5.5v15M13 5.5v15" stroke="#a8c4e6" stroke-width="1.1"/><g transform="rotate(45 15 14)"><rect x="12.5" y="5" width="5" height="13" fill="#f2c34a" stroke="#cf9a2a" stroke-width=".7"/><path d="M12.5 18l2.5 4.5 2.5-4.5z" fill="#f3d9a8"/><rect x="12.5" y="3" width="5" height="3" rx="1" fill="#e8a0a0"/></g></svg><b style="left:35px">Advanced Grid</b></div>
<svg class="ab" style="left:937px;top:711.5px" width="20" height="19" viewBox="0 0 20 19"><rect x=".5" y="5" width="8.5" height="13.5" rx="1.5" fill="#4f5660"/><rect x="11" y="5" width="8.5" height="13.5" rx="1.5" fill="#4f5660"/><rect x="2.5" y=".5" width="5" height="5.5" fill="#636a74"/><rect x="12.5" y=".5" width="5" height="5.5" fill="#636a74"/><rect x="8" y="7" width="4" height="5.5" fill="#3f454d"/><rect x="1.5" y="12.5" width="6.5" height="4.5" fill="#8d949e"/><rect x="12" y="12.5" width="6.5" height="4.5" fill="#8d949e"/></svg>
<div class="t " style="left:963.5px;top:708.5px;font-size:19.1px">Course Code</div>
<div class="t " style="left:1088px;top:695.2px;font-size:16.2px;font-style:italic">After Searching Press Enter, Tab or Click Out of Box</div>
<div class="ab ar" style="left:1087px;top:716px;width:383px;height:28px;background:#fdf9c2;border:1px solid #4a4a4a;color:#b9b59a;font-size:20px;line-height:25px;padding-left:3px">Enter: Course Code</div>
<div id="grid" class="ab">
<div class="gh" style="left:0.00px;width:56.00px;padding-left:15.5px;">Tag</div>
<div class="gh" style="left:56.00px;width:72.50px;padding-left:6px;">Id #</div>
<div class="gh" style="left:128.50px;width:162.00px;padding-left:6px;">Course Code</div>
<div class="gh" style="left:290.50px;width:162.50px;padding-left:6px;">Teacher w Id</div>
<div class="gh" style="left:453.00px;width:63.75px;text-align:right;padding-right:5px;">Nbr</div>
<div class="gh" style="left:516.75px;width:162.00px;padding-left:6px;">Grade Scale</div>
<div class="gh" style="left:678.75px;width:117.25px;padding-left:6px;">Room</div>
<div class="gh" style="left:796.00px;width:87.75px;padding-left:6px;">Sch Yr</div>
<div class="gh" style="left:883.75px;width:63.75px;text-align:center;">Gp 1</div>
<div class="gh" style="left:947.50px;width:64.25px;text-align:center;">Gp 2</div>
<div class="gh" style="left:1011.75px;width:64.25px;padding-left:6px;">Midt<u>...</u></div>
<div class="gh" style="left:1076.00px;width:64.75px;text-align:center;">Gp 3</div>
<div class="gh" style="left:1140.75px;width:64.25px;text-align:center;">Gp4</div>
<div class="gh" style="left:1205.00px;width:64.50px;text-align:center;">Exam2</div>
<div class="gh" style="left:1269.50px;width:65.00px;padding-left:6px;">Sum<u>...</u></div>
<div class="gh" style="left:1334.50px;width:10.50px;padding-left:6px;border-right:0;"></div>
<div class="ab" style="left:1345px;top:1px;width:17px;height:399px;background:#fff"></div>
<div class="ab" style="left:1347.5px;top:6px;width:0;height:0;border-left:5px solid transparent;border-right:5px solid transparent;border-bottom:7px solid #858585"></div>
<div class="ab" style="left:1348px;top:19.5px;width:9px;height:43.5px;background:#848484;border-radius:5px"></div>
<div class="gr s" style="top:31px"><i class="" style="left:0.0px;width:57.0px;"><span class="bx"></span></i><i class="" style="left:57.0px;width:72.0px;padding-left:5.75px;">4694</i><i class="" style="left:129.0px;width:162.0px;padding-left:5.75px;">P.E. Boys</i><i class="" style="left:291.0px;width:161.0px;padding-left:5.75px;">949 - Mr. McGaha</i><i class="r" style="left:452.0px;width:64.0px;">7</i><i class="" style="left:516.0px;width:161.0px;padding-left:5.75px;">10 pt +/- (High)</i><i class="" style="left:677.0px;width:117.0px;padding-left:5.75px;"></i><i class="" style="left:794.0px;width:85.5px;padding-left:5.75px;">2025-26</i><i style="left:879.5px;width:64.0px"><span class="ck" style="left:19.0px"></span></i><i style="left:943.5px;width:64.0px"><span class="ck" style="left:19.0px"></span></i><i style="left:1007.5px;width:64.0px"><span class="ck" style="left:19.0px"></span></i><i style="left:1071.5px;width:64.0px"><span class="ck" style="left:19.0px"></span></i><i style="left:1135.5px;width:64.0px"><span class="ck" style="left:19.0px"></span></i><i style="left:1199.5px;width:64.0px"><span class="ck" style="left:19.0px"></span></i><i style="left:1263.5px;width:64.0px"><span class="xx" style="left:22.8px"></span></i></div>
<div class="gr o" style="top:61px"><i class="" style="left:0.0px;width:57.0px;"><span class="bx"></span></i><i class="" style="left:57.0px;width:72.0px;padding-left:5.75px;">4800</i><i class="" style="left:129.0px;width:162.0px;padding-left:5.75px;">P.E. Boys</i><i class="" style="left:291.0px;width:161.0px;padding-left:5.75px;">949 - Mr. McGaha</i><i class="r" style="left:452.0px;width:64.0px;">0</i><i class="" style="left:516.0px;width:161.0px;padding-left:5.75px;">10 pt +/- (High)</i><i class="" style="left:677.0px;width:117.0px;padding-left:5.75px;"></i><i class="" style="left:794.0px;width:85.5px;padding-left:5.75px;">2026-27</i><i style="left:879.5px;width:64.0px"><span class="ck" style="left:19.0px"></span></i><i style="left:943.5px;width:64.0px"><span class="ck" style="left:19.0px"></span></i><i style="left:1007.5px;width:64.0px"><span class="ck" style="left:19.0px"></span></i><i style="left:1071.5px;width:64.0px"><span class="xx" style="left:22.8px"></span></i><i style="left:1135.5px;width:64.0px"><span class="xx" style="left:22.8px"></span></i><i style="left:1199.5px;width:64.0px"><span class="xx" style="left:22.8px"></span></i><i style="left:1263.5px;width:64.0px"><span class="xx" style="left:22.8px"></span></i></div>
<div class="gr" style="top:91px"><i class="" style="left:0.0px;width:57.0px;"><span class="bx"></span></i><i class="" style="left:57.0px;width:72.0px;padding-left:5.75px;">4695</i><i class="" style="left:129.0px;width:162.0px;padding-left:5.75px;">P.E. Girls</i><i class="" style="left:291.0px;width:161.0px;padding-left:5.75px;">1188 - Mr. Camp</i><i class="r" style="left:452.0px;width:64.0px;">10</i><i class="" style="left:516.0px;width:161.0px;padding-left:5.75px;">10 pt +/- (High)</i><i class="" style="left:677.0px;width:117.0px;padding-left:5.75px;">Gymnasium</i><i class="" style="left:794.0px;width:85.5px;padding-left:5.75px;">2025-26</i><i style="left:879.5px;width:64.0px"><span class="ck" style="left:19.0px"></span></i><i style="left:943.5px;width:64.0px"><span class="ck" style="left:19.0px"></span></i><i style="left:1007.5px;width:64.0px"><span class="ck" style="left:19.0px"></span></i><i style="left:1071.5px;width:64.0px"><span class="xx" style="left:22.8px"></span></i><i style="left:1135.5px;width:64.0px"><span class="xx" style="left:22.8px"></span></i><i style="left:1199.5px;width:64.0px"><span class="xx" style="left:22.8px"></span></i><i style="left:1263.5px;width:64.0px"><span class="xx" style="left:22.8px"></span></i></div>
<div class="gr o" style="top:121px"><i class="" style="left:0.0px;width:57.0px;"><span class="bx"></span></i><i class="" style="left:57.0px;width:72.0px;padding-left:5.75px;">4801</i><i class="" style="left:129.0px;width:162.0px;padding-left:5.75px;">P.E. Girls</i><i class="" style="left:291.0px;width:161.0px;padding-left:5.75px;">1188 - Mr. Camp</i><i class="r" style="left:452.0px;width:64.0px;">0</i><i class="" style="left:516.0px;width:161.0px;padding-left:5.75px;">10 pt +/- (High)</i><i class="" style="left:677.0px;width:117.0px;padding-left:5.75px;">Gymnasium</i><i class="" style="left:794.0px;width:85.5px;padding-left:5.75px;">2026-27</i><i style="left:879.5px;width:64.0px"><span class="ck" style="left:19.0px"></span></i><i style="left:943.5px;width:64.0px"><span class="ck" style="left:19.0px"></span></i><i style="left:1007.5px;width:64.0px"><span class="ck" style="left:19.0px"></span></i><i style="left:1071.5px;width:64.0px"><span class="xx" style="left:22.8px"></span></i><i style="left:1135.5px;width:64.0px"><span class="xx" style="left:22.8px"></span></i><i style="left:1199.5px;width:64.0px"><span class="xx" style="left:22.8px"></span></i><i style="left:1263.5px;width:64.0px"><span class="xx" style="left:22.8px"></span></i></div>
<div class="gr" style="top:151px"><i class="" style="left:0.0px;width:57.0px;"><span class="bx"></span></i><i class="" style="left:57.0px;width:72.0px;padding-left:5.75px;">4855</i><i class="" style="left:129.0px;width:162.0px;padding-left:5.75px;">P.E. Girls</i><i class="" style="left:291.0px;width:161.0px;padding-left:5.75px;">1188 - Mr. Camp</i><i class="r" style="left:452.0px;width:64.0px;">2</i><i class="" style="left:516.0px;width:161.0px;padding-left:5.75px;">10 pt +/- (High)</i><i class="" style="left:677.0px;width:117.0px;padding-left:5.75px;">Gymnasium</i><i class="" style="left:794.0px;width:85.5px;padding-left:5.75px;">2025-26</i><i style="left:879.5px;width:64.0px"><span class="ck" style="left:19.0px"></span></i><i style="left:943.5px;width:64.0px"><span class="ck" style="left:19.0px"></span></i><i style="left:1007.5px;width:64.0px"><span class="ck" style="left:19.0px"></span></i><i style="left:1071.5px;width:64.0px"><span class="ck" style="left:19.0px"></span></i><i style="left:1135.5px;width:64.0px"><span class="xx" style="left:22.8px"></span></i><i style="left:1199.5px;width:64.0px"><span class="xx" style="left:22.8px"></span></i><i style="left:1263.5px;width:64.0px"><span class="xx" style="left:22.8px"></span></i></div>
<div class="gr o" style="top:181px"><i class="" style="left:0.0px;width:57.0px;"><span class="bx"></span><svg class="ab" style="left:14px;top:0" width="30" height="30" viewBox="0 0 30 30"><path d="M4.3 15.7L8.7 11.8L13.9 17.6L26.9 1.4L28.8 7L13.6 24.6Z" fill="#000" stroke="#000" stroke-width="1" stroke-linejoin="round"/></svg></i><i class="" style="left:57.0px;width:72.0px;padding-left:5.75px;">4726</i><i class="" style="left:129.0px;width:162.0px;padding-left:5.75px;">.Learning Center</i><i class="" style="left:291.0px;width:161.0px;padding-left:5.75px;">949 - Mr. McGaha</i><i class="r" style="left:452.0px;width:64.0px;">1</i><i class="" style="left:516.0px;width:161.0px;padding-left:5.75px;">ACE</i><i class="" style="left:677.0px;width:117.0px;padding-left:5.75px;"></i><i class="" style="left:794.0px;width:85.5px;padding-left:5.75px;">2025-26</i><i style="left:879.5px;width:64.0px"><span class="ck" style="left:19.0px"></span></i><i style="left:943.5px;width:64.0px"><span class="ck" style="left:19.0px"></span></i><i style="left:1007.5px;width:64.0px"><span class="ck" style="left:19.0px"></span></i><i style="left:1071.5px;width:64.0px"><span class="ck" style="left:19.0px"></span></i><i style="left:1135.5px;width:64.0px"><span class="ck" style="left:19.0px"></span></i><i style="left:1199.5px;width:64.0px"><span class="ck" style="left:19.0px"></span></i><i style="left:1263.5px;width:64.0px"><span class="ck" style="left:19.0px"></span></i></div>
<div class="gr" style="top:211px"><i class="" style="left:0.0px;width:57.0px;"><span class="bx"></span><svg class="ab" style="left:14px;top:0" width="30" height="30" viewBox="0 0 30 30"><path d="M4.3 15.7L8.7 11.8L13.9 17.6L26.9 1.4L28.8 7L13.6 24.6Z" fill="#000" stroke="#000" stroke-width="1" stroke-linejoin="round"/></svg></i><i class="" style="left:57.0px;width:72.0px;padding-left:5.75px;">4740</i><i class="" style="left:129.0px;width:162.0px;padding-left:5.75px;">.Learning Center</i><i class="" style="left:291.0px;width:161.0px;padding-left:5.75px;">1222 - Ms. Patti</i><i class="r" style="left:452.0px;width:64.0px;">0</i><i class="" style="left:516.0px;width:161.0px;padding-left:5.75px;">ACE</i><i class="" style="left:677.0px;width:117.0px;padding-left:5.75px;"></i><i class="" style="left:794.0px;width:85.5px;padding-left:5.75px;">2025-26</i><i style="left:879.5px;width:64.0px"><span class="ck" style="left:19.0px"></span></i><i style="left:943.5px;width:64.0px"><span class="ck" style="left:19.0px"></span></i><i style="left:1007.5px;width:64.0px"><span class="ck" style="left:19.0px"></span></i><i style="left:1071.5px;width:64.0px"><span class="ck" style="left:19.0px"></span></i><i style="left:1135.5px;width:64.0px"><span class="ck" style="left:19.0px"></span></i><i style="left:1199.5px;width:64.0px"><span class="ck" style="left:19.0px"></span></i><i style="left:1263.5px;width:64.0px"><span class="ck" style="left:19.0px"></span></i></div>
<div class="gr o" style="top:241px"><i class="" style="left:0.0px;width:57.0px;"><span class="bx"></span><svg class="ab" style="left:14px;top:0" width="30" height="30" viewBox="0 0 30 30"><path d="M4.3 15.7L8.7 11.8L13.9 17.6L26.9 1.4L28.8 7L13.6 24.6Z" fill="#000" stroke="#000" stroke-width="1" stroke-linejoin="round"/></svg></i><i class="" style="left:57.0px;width:72.0px;padding-left:5.75px;">4768</i><i class="" style="left:129.0px;width:162.0px;padding-left:5.75px;">.Learning Center</i><i class="" style="left:291.0px;width:161.0px;padding-left:5.75px;">900 - Mrs. Carnahan</i><i class="r" style="left:452.0px;width:64.0px;">2</i><i class="" style="left:516.0px;width:161.0px;padding-left:5.75px;">ACE</i><i class="" style="left:677.0px;width:117.0px;padding-left:5.75px;">C-109</i><i class="" style="left:794.0px;width:85.5px;padding-left:5.75px;">2025-26</i><i style="left:879.5px;width:64.0px"><span class="ck" style="left:19.0px"></span></i><i style="left:943.5px;width:64.0px"><span class="ck" style="left:19.0px"></span></i><i style="left:1007.5px;width:64.0px"><span class="ck" style="left:19.0px"></span></i><i style="left:1071.5px;width:64.0px"><span class="ck" style="left:19.0px"></span></i><i style="left:1135.5px;width:64.0px"><span class="ck" style="left:19.0px"></span></i><i style="left:1199.5px;width:64.0px"><span class="ck" style="left:19.0px"></span></i><i style="left:1263.5px;width:64.0px"><span class="xx" style="left:22.8px"></span></i></div>
<div class="gr" style="top:271px"><i class="" style="left:0.0px;width:57.0px;"><span class="bx"></span></i><i class="" style="left:57.0px;width:72.0px;padding-left:5.75px;">4831</i><i class="" style="left:129.0px;width:162.0px;padding-left:5.75px;">.Learning Center</i><i class="" style="left:291.0px;width:161.0px;padding-left:5.75px;">949 - Mr. McGaha</i><i class="r" style="left:452.0px;width:64.0px;">0</i><i class="" style="left:516.0px;width:161.0px;padding-left:5.75px;">ACE</i><i class="" style="left:677.0px;width:117.0px;padding-left:5.75px;"></i><i class="" style="left:794.0px;width:85.5px;padding-left:5.75px;">2026-27</i><i style="left:879.5px;width:64.0px"><span class="ck" style="left:19.0px"></span></i><i style="left:943.5px;width:64.0px"><span class="ck" style="left:19.0px"></span></i><i style="left:1007.5px;width:64.0px"><span class="ck" style="left:19.0px"></span></i><i style="left:1071.5px;width:64.0px"><span class="ck" style="left:19.0px"></span></i><i style="left:1135.5px;width:64.0px"><span class="ck" style="left:19.0px"></span></i><i style="left:1199.5px;width:64.0px"><span class="ck" style="left:19.0px"></span></i><i style="left:1263.5px;width:64.0px"><span class="ck" style="left:19.0px"></span></i></div>
<div class="gr o" style="top:301px"><i class="" style="left:0.0px;width:57.0px;"><span class="bx"></span></i><i class="" style="left:57.0px;width:72.0px;padding-left:5.75px;">4835</i><i class="" style="left:129.0px;width:162.0px;padding-left:5.75px;">.Learning Center</i><i class="" style="left:291.0px;width:161.0px;padding-left:5.75px;">1222 - Ms. Patti</i><i class="r" style="left:452.0px;width:64.0px;">0</i><i class="" style="left:516.0px;width:161.0px;padding-left:5.75px;">ACE</i><i class="" style="left:677.0px;width:117.0px;padding-left:5.75px;"></i><i class="" style="left:794.0px;width:85.5px;padding-left:5.75px;">2026-27</i><i style="left:879.5px;width:64.0px"><span class="ck" style="left:19.0px"></span></i><i style="left:943.5px;width:64.0px"><span class="ck" style="left:19.0px"></span></i><i style="left:1007.5px;width:64.0px"><span class="ck" style="left:19.0px"></span></i><i style="left:1071.5px;width:64.0px"><span class="ck" style="left:19.0px"></span></i><i style="left:1135.5px;width:64.0px"><span class="ck" style="left:19.0px"></span></i><i style="left:1199.5px;width:64.0px"><span class="ck" style="left:19.0px"></span></i><i style="left:1263.5px;width:64.0px"><span class="ck" style="left:19.0px"></span></i></div>
<div class="gr" style="top:331px"><i class="" style="left:0.0px;width:57.0px;"><span class="bx"></span></i><i class="" style="left:57.0px;width:72.0px;padding-left:5.75px;">4836</i><i class="" style="left:129.0px;width:162.0px;padding-left:5.75px;">.Learning Center</i><i class="" style="left:291.0px;width:161.0px;padding-left:5.75px;">900 - Mrs. Carnahan</i><i class="r" style="left:452.0px;width:64.0px;">0</i><i class="" style="left:516.0px;width:161.0px;padding-left:5.75px;">ACE</i><i class="" style="left:677.0px;width:117.0px;padding-left:5.75px;">C-109</i><i class="" style="left:794.0px;width:85.5px;padding-left:5.75px;">2026-27</i><i style="left:879.5px;width:64.0px"><span class="ck" style="left:19.0px"></span></i><i style="left:943.5px;width:64.0px"><span class="ck" style="left:19.0px"></span></i><i style="left:1007.5px;width:64.0px"><span class="ck" style="left:19.0px"></span></i><i style="left:1071.5px;width:64.0px"><span class="ck" style="left:19.0px"></span></i><i style="left:1135.5px;width:64.0px"><span class="ck" style="left:19.0px"></span></i><i style="left:1199.5px;width:64.0px"><span class="ck" style="left:19.0px"></span></i><i style="left:1263.5px;width:64.0px"><span class="xx" style="left:22.8px"></span></i></div>
<div class="gr o" style="top:361px"><i class="" style="left:0.0px;width:57.0px;"><span class="bx"></span></i><i class="" style="left:57.0px;width:72.0px;padding-left:5.75px;">4659</i><i class="" style="left:129.0px;width:162.0px;padding-left:5.75px;">01 Bible</i><i class="" style="left:291.0px;width:161.0px;padding-left:5.75px;">1264 - Christine</i><i class="r" style="left:452.0px;width:64.0px;">9</i><i class="" style="left:516.0px;width:161.0px;padding-left:5.75px;">E S N U</i><i class="" style="left:677.0px;width:117.0px;padding-left:5.75px;"></i><i class="" style="left:794.0px;width:85.5px;padding-left:5.75px;">2025-26</i><i style="left:879.5px;width:64.0px"><span class="ck" style="left:19.0px"></span></i><i style="left:943.5px;width:64.0px"><span class="ck" style="left:19.0px"></span></i><i style="left:1007.5px;width:64.0px"><span class="ck" style="left:19.0px"></span></i><i style="left:1071.5px;width:64.0px"><span class="ck" style="left:19.0px"></span></i><i style="left:1135.5px;width:64.0px"><span class="xx" style="left:22.8px"></span></i><i style="left:1199.5px;width:64.0px"><span class="xx" style="left:22.8px"></span></i><i style="left:1263.5px;width:64.0px"><span class="xx" style="left:22.8px"></span></i></div>
</div>
<div id="menu" class="ab">
<div class="mi" style="top:6.0px;left:43.5px">Apply Class Template</div>
<div class="ms" style="top:33.1px;height:1.2px;background:#d8d8d8"></div>
<div class="mi" style="top:40.0px;left:43.5px">Roll Forward</div>
<div class="mi" style="top:73.0px;left:43.5px">Make Classes Inactive</div>
<div class="ms" style="top:99.5px;height:2.5px"></div>
<div class="mi" style="top:108.0px;left:43.5px">Update Enrollment</div>
<div class="ms" style="top:135px;height:3px"></div>
<div class="mi" style="top:144.0px;left:49.5px">Batch Tag</div>
<div class="mi" style="top:177.0px;left:49.5px">Clear All Tags</div>
<div class="mi" style="top:210.0px;left:43.5px">Tag Filtered Records</div>
<div class="mi" style="top:243.0px;left:43.5px">Make Tagged Inactive</div>
<div class="mi" style="top:276.0px;left:43.5px">Batch Edit Tags</div>
<div class="mi" style="top:309.0px;left:43.5px">Save Grid As Template</div>
<svg class="ab" style="left:11px;top:7px" width="22" height="20" viewBox="0 0 22 20"><rect x=".5" y=".5" width="21" height="19" rx="1" fill="#b9bcc2"/><rect x="1.5" y="4" width="7" height="14.5" fill="#fbfbfb"/><rect x="10" y="4" width="10.5" height="14.5" fill="#fdfdfd"/><path d="M3 7h3.5M3 9.5h4M3 12h3.5M3 14.5h4" stroke="#9aa0a8" stroke-width="1"/></svg>
<div class="ab ar b" style="left:10.5px;top:46px;font-size:10.5px;line-height:11px;color:#ffeec2;letter-spacing:-.2px;text-shadow:0 0 2px #f28c00,0 0 2px #f28c00,0 0 3px #f5a020">NEW</div>
<div class="bx" style="left:11px;top:142.5px"></div>
<svg class="ab" style="left:11px;top:141px" width="30" height="30" viewBox="0 0 30 30"><path d="M4.3 15.7L8.7 11.8L13.9 17.6L26.9 1.4L28.8 7L13.6 24.6Z" fill="#000" stroke="#000" stroke-width="1" stroke-linejoin="round"/></svg>
<div class="bx" style="left:11px;top:175.5px"></div>
<div class="ab" style="left:12px;top:213px;width:22.5px;height:22px;background:#dcdcdc;border:2px solid;border-color:#8e8e8e #777 #6e6e6e #8a8a8a"></div>
<svg class="ab" style="left:13px;top:212px" width="22" height="22" viewBox="0 0 22 22"><path d="M3.5 12.5l2.5-2 3 4.5c2-5 6-10 11-13l1.200 1.5c-5 4-9 10-11 16.5l-2.5.8c-1-3-2.5-5.5-4.700-8.300z" fill="#2c2c2c"/></svg>
<svg class="ab" style="left:12px;top:244px" width="22" height="22" viewBox="0 0 22 22"><circle cx="11" cy="11" r="10" fill="#3e3e3e" stroke="#2a2a2a" stroke-width="1"/><rect x="8" y="8" width="6" height="6" rx="1.5" fill="#e8484c"/></svg>
<svg class="ab" style="left:8px;top:272px" width="30" height="30" viewBox="0 0 24 24"><g transform="rotate(45 12 12)"><rect x="9" y="1.5" width="6" height="4" rx="1.5" fill="#e8a0a0"/><rect x="9" y="4.5" width="6" height="13.5" fill="#f2c34a" stroke="#cf9a2a" stroke-width=".8"/><path d="M9 18l3 5 3-5z" fill="#f3d9a8"/><path d="M11 21.3l1 1.700 1-1.700z" fill="#444"/></g></svg>
<svg class="ab" style="left:12px;top:311px" width="22" height="22" viewBox="0 0 22 22"><rect x="1" y="1" width="20" height="20" rx="1" fill="#f8fbff" stroke="#8fb0dc" stroke-width="1.4"/><rect x="2" y="2" width="18" height="3" fill="#bcd97a"/><path d="M1 8.5h20M1 12.5h20M1 16.5h20M7.5 5v16M14 5v16" stroke="#a8c4e6" stroke-width="1.2"/></svg>
</div>
<div id="circle" class="ab"></div>
</body></html>
